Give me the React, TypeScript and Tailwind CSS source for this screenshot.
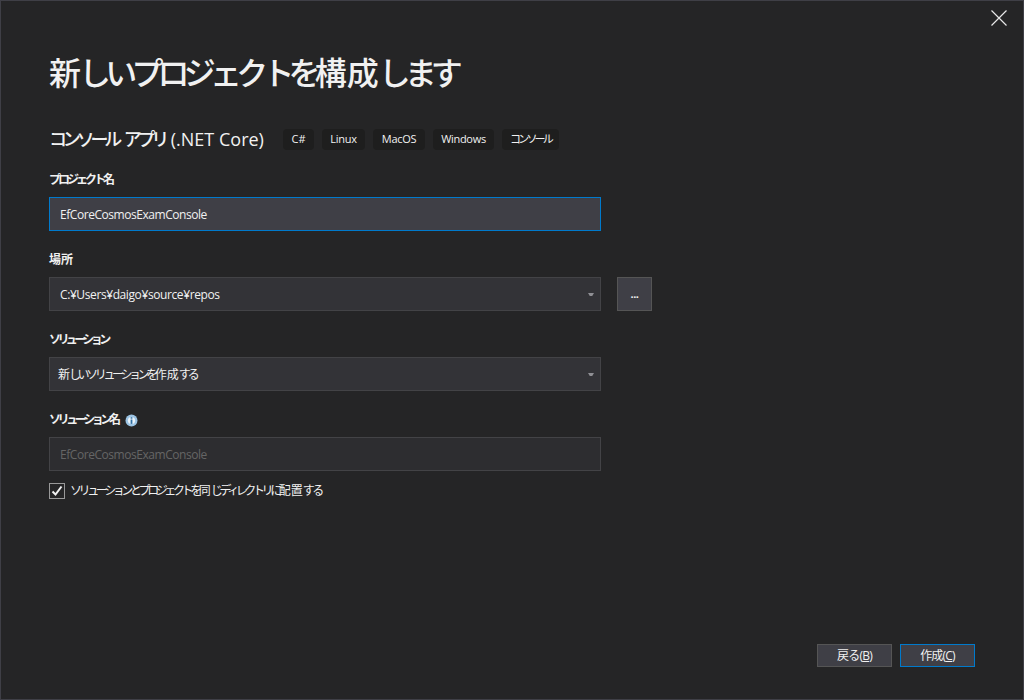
import React from 'react';

const font = "font-['Open_Sans','Noto_Sans_CJK_JP',sans-serif]";

function Caret() {
  return <div className="ml-auto mr-[6px] w-[6px] h-[3px] bg-[#8f8f94] [clip-path:polygon(0_0,100%_0,70%_100%,30%_100%)]" />;
}

function Tag({ label, className }: { label: string; className: string }) {
  return (
    <span className={`h-[21px] flex items-center justify-center rounded-[4px] bg-[#1e1e1e] text-[11px] text-[#f1f1f1] ${className}`}>
      {label}
    </span>
  );
}

function Label({ children }: { children: React.ReactNode }) {
  return <div className="h-[18px] flex items-center text-[12px] font-semibold text-[#f1f1f1]">{children}</div>;
}

export default function App() {
  return (
    <div className={`w-[1024px] h-[700px] flex flex-col bg-[#252526] border border-[#3f3f46] text-[#f1f1f1] ${font}`}>
      <div className="h-[17px] shrink-0 flex justify-end pt-[9px] pr-[16px]">
        <svg width="16" height="16" viewBox="0 0 16 16" className="shrink-0 overflow-visible">
          <path d="M0.5 0.5 L15.5 15.5 M15.5 0.5 L0.5 15.5" stroke="#e8e8e8" strokeWidth="1.2" fill="none" />
        </svg>
      </div>
      <div className="flex flex-col pl-[48px] flex-1">
        <h1 className="mt-[33px] h-[44px] flex items-center text-[32px] font-medium whitespace-pre">
          <span className="tracking-[-2px]">新</span><span className="tracking-[-5.8px]">しいプロジェクトを</span>構成<span className="tracking-[-6px]">します</span>
        </h1>
        <div className="mt-[33px] h-[22px] flex items-center">
          <span className="text-[18px] font-medium w-[234px] whitespace-pre">
            <span className="tracking-[-4.2px]">コンソール</span><span className="tracking-[1px]"> </span><span className="tracking-[-4.2px]">アプリ</span><span className="tracking-[1px]"> </span>(.NET Core)
          </span>
          <div className="flex gap-[8px]">
            <Tag label="C#" className="w-[31px]" />
            <Tag label="Linux" className="w-[43px] tracking-[-0.3px]" />
            <Tag label="MacOS" className="w-[52px] tracking-[-0.3px]" />
            <Tag label="Windows" className="w-[61px] tracking-[-0.3px]" />
            <Tag label="コンソール" className="w-[57px] tracking-[-2.8px]" />
          </div>
        </div>
        <div className="mt-[21px]">
          <Label><span className="tracking-[-3px]">プロジェクト</span>名</Label>
        </div>
        <div className="mt-[8px] w-[552px] h-[34px] flex items-center bg-[#3f3f46] border border-[#007acc] pl-[10px] pt-[1px] text-[12px] tracking-[-0.45px]">
          EfCoreCosmosExamConsole
        </div>
        <div className="mt-[20px]"><Label>場所</Label></div>
        <div className="mt-[8px] flex gap-[16px]">
          <div className="w-[552px] h-[34px] flex items-center bg-[#333337] border border-[#434346] pl-[10px] pt-[1px] text-[12px] tracking-[-0.4px]">
            C:¥Users¥daigo¥source¥repos
            <Caret />
          </div>
          <div className="w-[35px] h-[34px] flex items-center justify-center bg-[#3f3f46] border border-[#555555] text-[11px] font-bold tracking-[-0.5px]">...</div>
        </div>
        <div className="mt-[20px]">
          <Label><span className="tracking-[-3.6px]">ソリューション</span></Label>
        </div>
        <div className="mt-[8px] w-[552px] h-[34px] flex items-center bg-[#333337] border border-[#434346] pl-[8px] pt-[1px] text-[12px]">
          <span><span className="tracking-[-1px]">新</span><span className="tracking-[-3.4px]">しいソリューションを</span>作成<span className="tracking-[-3px]">する</span></span>
          <Caret />
        </div>
        <div className="mt-[20px] flex items-center gap-[4px]">
          <Label><span className="tracking-[-3.4px]">ソリューション</span>名</Label>
          <svg width="13" height="13" viewBox="0 0 13 13">
            <circle cx="6.5" cy="6.5" r="6" fill="#9cc4e4" />
            <circle cx="6.5" cy="6.5" r="3.6" fill="#eaf3fa" />
            <rect x="5.6" y="5.5" width="1.8" height="4.4" fill="#2f6fa3" />
            <rect x="5.6" y="3.2" width="1.8" height="1.5" fill="#2f6fa3" />
          </svg>
        </div>
        <div className="mt-[8px] w-[552px] h-[34px] flex items-center bg-[#2d2d30] border border-[#434346] pl-[10px] pt-[1px] text-[12px] tracking-[-0.45px] text-[#656565]">
          EfCoreCosmosExamConsole
        </div>
        <div className="mt-[11px] flex items-center gap-[5px]">
          <div className="w-[16px] h-[16px] flex items-center justify-center bg-[#252526] border border-[#999999]">
            <svg width="12" height="12" viewBox="0 0 12 12">
              <path d="M1.5 6.5 L4.5 9.5 L10.5 1.5" stroke="#f1f1f1" strokeWidth="2" fill="none" />
            </svg>
          </div>
          <span className="text-[12px]">
            <span className="tracking-[-3.4px]">ソリューションとプロジェクトを</span>同<span className="tracking-[-3.4px]">じディレクトリに</span>配置<span className="tracking-[-2.4px]">する</span>
          </span>
        </div>
        <div className="mt-auto mb-[32px] mr-[48px] flex justify-end gap-[8px]">
          <button className="w-[75px] h-[23px] flex items-center justify-center bg-[#3f3f46] border border-[#555555] text-[12px] tracking-[-0.8px]">
            <span>戻る(<span className="underline">B</span>)</span>
          </button>
          <button className="w-[75px] h-[23px] flex items-center justify-center bg-[#3f3f46] border border-[#007acc] text-[12px] tracking-[-0.8px]">
            <span>作成(<span className="underline">C</span>)</span>
          </button>
        </div>
      </div>
    </div>
  );
}
